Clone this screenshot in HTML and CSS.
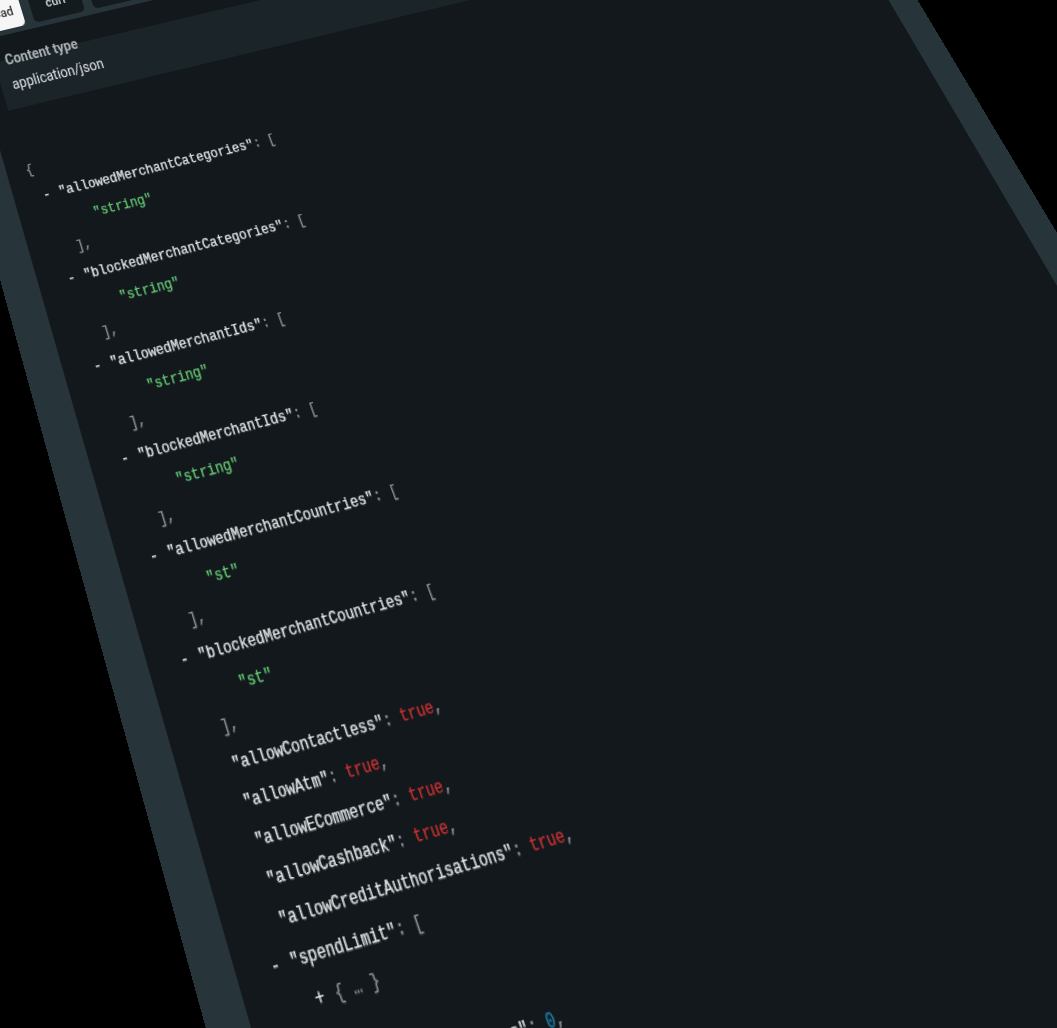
FILE: index.html
```html
<!DOCTYPE html>
<html lang="en">
<head>
<meta charset="utf-8">
<title>Response sample</title>
<link rel="stylesheet" href="styles.css">
</head>
<body>
<section class="panel">
  <div class="tabs">
    <div class="tab tab-active">Payload</div>
    <div class="tab tab-curl">curl</div>
    <div class="tab tab-wide">Node.js</div>
  </div>
  <div class="inner">
    <div class="ctype">
      <div class="ctype-label">Content type</div>
      <div class="ctype-value">application/json</div>
    </div>
    <div class="code">
      <div class="line root"><span class="p">{</span></div>
      <div class="line"><span class="fold">-</span><span class="k">"allowedMerchantCategories"</span><span class="p">: [</span></div>
      <div class="line item"><span class="s">"string"</span></div>
      <div class="line key"><span class="p">],</span></div>
      <div class="line"><span class="fold">-</span><span class="k">"blockedMerchantCategories"</span><span class="p">: [</span></div>
      <div class="line item"><span class="s">"string"</span></div>
      <div class="line key"><span class="p">],</span></div>
      <div class="line"><span class="fold">-</span><span class="k">"allowedMerchantIds"</span><span class="p">: [</span></div>
      <div class="line item"><span class="s">"string"</span></div>
      <div class="line key"><span class="p">],</span></div>
      <div class="line"><span class="fold">-</span><span class="k">"blockedMerchantIds"</span><span class="p">: [</span></div>
      <div class="line item"><span class="s">"string"</span></div>
      <div class="line key"><span class="p">],</span></div>
      <div class="line"><span class="fold">-</span><span class="k">"allowedMerchantCountries"</span><span class="p">: [</span></div>
      <div class="line item"><span class="s">"st"</span></div>
      <div class="line key"><span class="p">],</span></div>
      <div class="line"><span class="fold">-</span><span class="k">"blockedMerchantCountries"</span><span class="p">: [</span></div>
      <div class="line item"><span class="s">"st"</span></div>
      <div class="line key"><span class="p">],</span></div>
      <div class="line key"><span class="k">"allowContactless"</span><span class="p">: </span><span class="b">true</span><span class="p">,</span></div>
      <div class="line key"><span class="k">"allowAtm"</span><span class="p">: </span><span class="b">true</span><span class="p">,</span></div>
      <div class="line key"><span class="k">"allowECommerce"</span><span class="p">: </span><span class="b">true</span><span class="p">,</span></div>
      <div class="line key"><span class="k">"allowCashback"</span><span class="p">: </span><span class="b">true</span><span class="p">,</span></div>
      <div class="line key"><span class="k">"allowCreditAuthorisations"</span><span class="p">: </span><span class="b">true</span><span class="p">,</span></div>
      <div class="line"><span class="fold">-</span><span class="k">"spendLimit"</span><span class="p">: [</span></div>
      <div class="line nested"><span class="fold">+</span><span class="p">{ … }</span></div>
      <div class="line key"><span class="p">],</span></div>
      <div class="line key"><span class="k">"maxSpendTransactions"</span><span class="p">: </span><span class="n">0</span><span class="p">,</span></div>
    </div>
  </div>
</section>
</body>
</html>
```
FILE: styles.css
```css
html, body {
  margin: 0;
  height: 100%;
  background: #000;
  overflow: hidden;
}

.panel {
  position: absolute;
  top: 0;
  left: 0;
  width: 1042px;
  box-sizing: border-box;
  padding: 0 30px 0 36px;
  background: #27343a;
  transform-origin: 0 0;
  transform: matrix3d(0.94000, -0.21867, 0, 0.00005900,
                      0.29476, 0.98252, 0, -0.00032003,
                      0, 0, 1, 0,
                      14.2, 199.7, 0, 1)
             translate(-36px, -212px);
  font-family: Roboto, "Liberation Sans", sans-serif;
  color: #dfe3e5;
}

.tabs {
  display: flex;
  gap: 10px;
  padding: 16px 0 5px;
}

.tab {
  height: 34px;
  line-height: 34px;
  border-radius: 5px;
  background: #141b1f;
  color: #d5d9db;
  font-size: 13px;
  font-weight: 500;
  text-align: center;
  box-sizing: border-box;
}

.tab-active {
  width: 65px;
  background: #f6f6f6;
  color: #333;
}

.tab-curl { width: 57px; }
.tab-wide { width: 113px; }

.inner {
  height: 950px;
  padding-top: 25px;
  background: #12181c;
  box-sizing: border-box;
}

.ctype {
  display: flex;
  flex-direction: column;
  margin: 0 20px;
  padding: 0 12px 9px;
  background: #1b2429;
}

.ctype-label {
  margin-top: -9px;
  height: 19px;
  line-height: 19px;
  font-size: 14px;
  font-weight: 700;
  color: #adb4b8;
}

.ctype-value {
  height: 30px;
  line-height: 30px;
  font-size: 14px;
  color: #e3e7e9;
}

.code {
  padding-top: 47px;
  font-family: "Liberation Mono", monospace;
  font-size: 13px;
  line-height: 26px;
  -webkit-text-stroke: 0.25px currentColor;
}

.line { padding-left: 30px; height: 26px; white-space: pre; }
.root { padding-left: 20px; }
.key { padding-left: 48px; }
.item { padding-left: 75px; }
.nested { padding-left: 58px; }

.fold {
  display: inline-block;
  width: 17px;
  color: #e6e6e6;
}

.p { color: #8b9599; }
.k { color: #e4e7e8; }
.s { color: #66c975; }
.b { color: #c93232; }
.n { color: #1f7fad; }
```
